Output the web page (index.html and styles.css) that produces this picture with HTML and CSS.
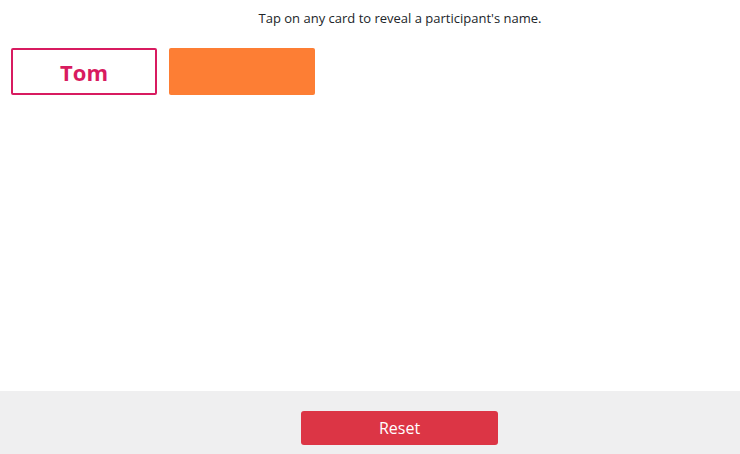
FILE: index.html
```html
<!DOCTYPE html>
<html lang="en">
<head>
  <meta charset="UTF-8">
  <meta name="viewport" content="width=device-width, initial-scale=1.0">
  <title>Reveal names</title>
  <link rel="stylesheet" href="styles.css">
</head>
<body>
  <div class="page">
    <div class="content">
      <p class="hint">Tap on any card to reveal a participant's name.</p>
      <div class="cards">
        <div class="card revealed">Tom</div>
        <div class="card hidden"></div>
      </div>
    </div>
    <div class="footer">
      <button class="btn-reset">Reset</button>
    </div>
  </div>
</body>
</html>
```

FILE: styles.css
```css
html, body {
  margin: 0;
  padding: 0;
  overflow: hidden;
}
body {
  font-family: "Open Sans", "Noto Sans", sans-serif;
  color: #212529;
  background-color: white;
}
.page {
  display: flex;
  flex-direction: column;
  height: 454px;
}
.content {
  flex: 1;
  padding: 0 11px;
}
.hint {
  margin: 9px 0 0;
  padding-left: 60px;
  text-align: center;
  font-size: 13px;
  line-height: 18px;
}
.cards {
  display: flex;
  gap: 12px;
  margin-top: 21px;
}
.card {
  width: 146px;
  height: 47px;
  box-sizing: border-box;
  border-radius: 2px;
  display: flex;
  align-items: center;
  justify-content: center;
  cursor: pointer;
}
.revealed {
  border: 2px solid #d81b60;
  color: #d81b60;
  font-weight: bold;
  font-size: 22px;
}
.hidden {
  background-color: #fd7e34;
}
.footer {
  height: 63px;
  box-sizing: border-box;
  background-color: #efeff0;
  padding: 20px 0 0 301px;
}
.btn-reset {
  display: block;
  width: 197px;
  height: 34px;
  border: none;
  border-radius: 3px;
  background-color: #dc3545;
  color: white;
  font-family: "Open Sans", "Noto Sans", sans-serif;
  font-size: 16px;
  cursor: pointer;
}
```
